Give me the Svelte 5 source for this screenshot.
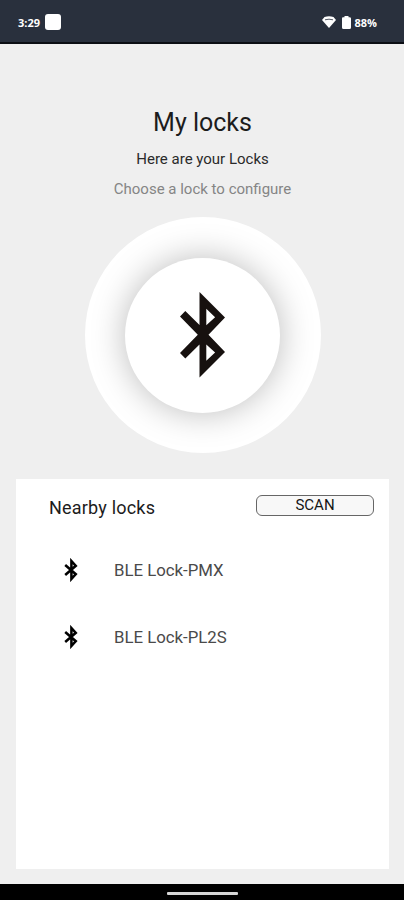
<script>
  let time = '3:29';
  let battery = 88;
  let locks = [
    { id: 1, name: 'BLE Lock-PMX' },
    { id: 2, name: 'BLE Lock-PL2S' }
  ];
</script>

<div class="screen">
  <header class="status">
    <span>{time}</span>
    <span class="app-icon"></span>
    <div class="indicators">
      <svg class="wifi" viewBox="0 0 14 12">
        <path d="M2.5 1Q7-.4 11.5 1L14 4 7 12 0 4z" fill="#fff" />
        <path d="M3 3.8Q7 2.6 11 3.8" fill="none" stroke="#29303d" stroke-width="0.8" />
      </svg>
      <svg class="battery" viewBox="0 0 9 13">
        <path d="M2.5 0h4v1.2h1Q9 1.2 9 2.5v9Q9 13 7.5 13h-6Q0 13 0 11.5v-9q0-1.3 1-1.3h1.5z" fill="#fff" />
      </svg>
      <span>{battery}%</span>
    </div>
  </header>

  <main>
    <h1>My locks</h1>
    <p class="subtitle">Here are your Locks</p>
    <p class="hint">Choose a lock to configure</p>

    <div class="ring">
      <div class="disc">
        <svg class="logo" viewBox="0 0 45 86">
          <path
            fill="#17110f"
            fill-rule="evenodd"
            d="M19.5 0L45 25.5 28.5 42.8 45 60 19.5 85.5V52.5L5.3 66.5 0 61l17.8-18.2L0 24.5l5.3-5.4 14.2 14zM26.3 16.8v16.4l8.8-8zM26.3 52.4v16.4l8.8-8.4z"
          />
        </svg>
      </div>
    </div>

    <section class="panel">
      <div class="panel-head">
        <h2>Nearby locks</h2>
        <button>SCAN</button>
      </div>
      <ul>
        {#each locks as lock (lock.id)}
          <li>
            <svg class="bt" viewBox="0 0 14 24">
              <path
                d="M1.2 7l10.6 9.2L7.4 21V3l4.4 4.8L1.2 17"
                fill="none"
                stroke="#000"
                stroke-width="2.5"
              />
            </svg>
            <span>{lock.name}</span>
          </li>
        {/each}
      </ul>
    </section>
  </main>

  <footer>
    <div class="handle"></div>
  </footer>
</div>

<style>
  .screen {
    display: flex;
    flex-direction: column;
    width: 404px;
    height: 900px;
    background: #efefef;
    color: #1c1c1c;
    font-family: Roboto, sans-serif;
    overflow: hidden;
  }

  .status {
    display: flex;
    align-items: center;
    box-sizing: border-box;
    height: 44px;
    padding: 2px 27px 0 18px;
    background: #29303d;
    border-bottom: 2px solid #0b0e14;
    color: #fff;
    font-family: 'Open Sans', sans-serif;
    font-size: 11px;
    font-weight: 700;
  }

  .app-icon {
    width: 16px;
    height: 16px;
    margin-left: 5px;
    border-radius: 3px;
    background: #fff;
  }

  .indicators {
    display: flex;
    align-items: center;
    margin-left: auto;
  }

  .wifi {
    width: 14px;
    height: 12px;
    margin-right: 6px;
  }

  .battery {
    width: 9px;
    height: 13px;
    margin-right: 4px;
  }

  main {
    display: flex;
    flex: 1;
    flex-direction: column;
    align-items: center;
    padding: 63px 15px 0 16px;
  }

  h1, h2, p {
    margin: 0;
    font-weight: 400;
  }

  h1 {
    font-size: 25px;
    line-height: 32px;
  }

  .subtitle {
    margin-top: 10px;
    font-size: 15px;
    line-height: 20px;
    color: #2a2a2a;
  }

  .hint {
    margin-top: 10px;
    font-size: 15px;
    line-height: 20px;
    color: #858585;
  }

  .ring {
    display: flex;
    align-items: center;
    justify-content: center;
    width: 236px;
    height: 236px;
    margin-top: 18.4px;
    border-radius: 50%;
    background: #fff;
  }

  .disc {
    display: flex;
    align-items: center;
    justify-content: center;
    width: 155px;
    height: 155px;
    border-radius: 50%;
    background: #fff;
    box-shadow: 0 0 34px rgba(0, 0, 0, 0.27);
  }

  .logo {
    width: 45px;
    height: 86px;
  }

  .panel {
    align-self: stretch;
    height: 390px;
    margin-top: 25.6px;
    background: #fff;
  }

  .panel-head {
    display: flex;
    align-items: flex-start;
    justify-content: space-between;
    padding: 16px 15px 0 33px;
  }

  h2 {
    padding-top: 1px;
    font-size: 18px;
    line-height: 24px;
    letter-spacing: 0.2px;
  }

  button {
    width: 118px;
    height: 21px;
    padding: 0;
    border: 1px solid #666;
    border-radius: 6px;
    background: #f8f8f8;
    color: #151515;
    font-family: inherit;
    font-size: 15px;
    line-height: 19px;
  }

  ul {
    margin: 16.5px 0 0;
    padding: 0;
    list-style: none;
  }

  li {
    display: flex;
    align-items: center;
    height: 67px;
    padding-left: 48px;
    color: #4a4a4a;
    font-size: 16.8px;
  }

  .bt {
    width: 14px;
    height: 24px;
    margin-right: 36px;
  }

  footer {
    display: flex;
    justify-content: center;
    height: 16px;
    background: #000;
  }

  .handle {
    width: 71px;
    height: 3px;
    margin-top: 8px;
    border-radius: 1px;
    background: #d6d6d6;
  }
</style>
